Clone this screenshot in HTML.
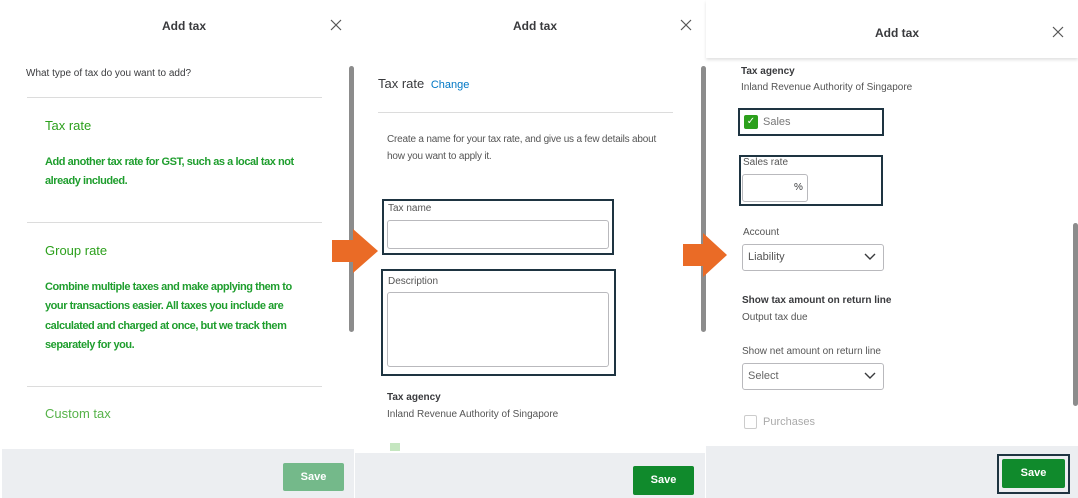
<!DOCTYPE html>
<html><head><style>
*{margin:0;padding:0;box-sizing:border-box}
body{width:1078px;height:498px;position:relative;overflow:hidden;background:#fff;font-family:"Liberation Sans",sans-serif;color:#393a3d}
.a{position:absolute}
.t{font-size:12px;font-weight:bold;color:#393a3d}
.g{color:#2ca01c}
.gb{color:#1f9e2e;font-weight:bold;font-size:11px;line-height:19.3px;letter-spacing:-0.45px}
.hl{position:absolute;height:1px;background:#dcdcdc}
.box{position:absolute;border:2px solid #1e3441}
.inp{position:absolute;border:1px solid #b9b9bd;border-radius:3px;background:#fff}
.lab{font-size:10px;color:#555}
.foot{position:absolute;background:#eceef1}
.save{position:absolute;background:#108a2c;color:#fff;font-weight:bold;font-size:11px;text-align:center;border-radius:2px}
.sb{position:absolute;width:5px;background:#8c8c8c;border-radius:3px}
</style></head><body>
<!-- panel 1 -->
<div class="a t" style="left:162px;top:19px">Add tax</div>
<svg class="a" style="left:330px;top:19px" width="12" height="12"><path d="M1 1L11 11M11 1L1 11" stroke="#555" stroke-width="1.2"/></svg>
<div class="a" style="left:26px;top:68px;font-size:10px;color:#393a3d">What type of tax do you want to add?</div>
<div class="hl" style="left:27px;top:97px;width:295px"></div>
<div class="a g" style="left:45px;top:118px;font-size:13px">Tax rate</div>
<div class="a gb" style="left:45px;top:153px;width:260px">Add another tax rate for GST, such as a local tax not already included.</div>
<div class="hl" style="left:27px;top:222px;width:295px"></div>
<div class="a g" style="left:45px;top:243px;font-size:13px">Group rate</div>
<div class="a gb" style="left:45px;top:278px;width:260px">Combine multiple taxes and make applying them to your transactions easier. All taxes you include are calculated and charged at once, but we track them separately for you.</div>
<div class="hl" style="left:27px;top:386px;width:295px"></div>
<div class="a g" style="left:45px;top:406px;font-size:13px;opacity:.8">Custom tax</div>
<div class="sb" style="left:349px;top:66px;height:266px"></div>
<div class="foot" style="left:2px;top:449px;width:352px;height:49px"></div>
<div class="save" style="left:283px;top:463px;width:61px;height:28px;line-height:28px;background:#74b98a">Save</div>

<!-- panel 2 -->
<div class="a t" style="left:513px;top:19px">Add tax</div>
<svg class="a" style="left:680px;top:19px" width="12" height="12"><path d="M1 1L11 11M11 1L1 11" stroke="#555" stroke-width="1.2"/></svg>
<div class="a" style="left:378px;top:76px;font-size:13px">Tax rate <span style="color:#0077c5;font-size:11px;margin-left:3px">Change</span></div>
<div class="hl" style="left:378px;top:112px;width:295px"></div>
<div class="a" style="left:387px;top:131px;font-size:10px;line-height:17px;width:285px;color:#555;letter-spacing:-0.2px">Create a name for your tax rate, and give us a few details about how you want to apply it.</div>
<div class="box" style="left:382px;top:199px;width:232px;height:56px"></div>
<div class="a lab" style="left:388px;top:203px">Tax name</div>
<div class="inp" style="left:387px;top:220px;width:222px;height:29px"></div>
<div class="box" style="left:381px;top:269px;width:235px;height:107px"></div>
<div class="a lab" style="left:388px;top:276px">Description</div>
<div class="inp" style="left:387px;top:292px;width:222px;height:75px"></div>
<div class="a" style="left:387px;top:392px;font-size:10px;font-weight:bold">Tax agency</div>
<div class="a lab" style="left:387px;top:409px">Inland Revenue Authority of Singapore</div>
<div class="a" style="left:390px;top:443px;width:10px;height:8px;background:#c5e6c0"></div>
<div class="sb" style="left:701px;top:66px;height:266px"></div>
<div class="foot" style="left:355px;top:453px;width:350px;height:45px"></div>
<div class="save" style="left:633px;top:466px;width:61px;height:29px;line-height:29px">Save</div>

<!-- panel 3 -->
<div class="a" style="left:706px;top:0;width:372px;height:58px;box-shadow:0 2px 3px rgba(0,0,0,.12);background:#fff"></div>
<div class="a t" style="left:875px;top:26px">Add tax</div>
<svg class="a" style="left:1052px;top:26px" width="12" height="12"><path d="M1 1L11 11M11 1L1 11" stroke="#555" stroke-width="1.2"/></svg>
<div class="a" style="left:741px;top:66px;font-size:10px;font-weight:bold">Tax agency</div>
<div class="a lab" style="left:741px;top:82px">Inland Revenue Authority of Singapore</div>
<div class="box" style="left:738px;top:108px;width:146px;height:28px"></div>
<div class="a" style="left:744px;top:115px;width:14px;height:14px;background:#2ca01c;border-radius:2px;color:#fff;font-size:10px;line-height:14px;text-align:center">✓</div>
<div class="a" style="left:763px;top:116px;font-size:11px;color:#777">Sales</div>
<div class="box" style="left:739px;top:155px;width:144px;height:51px"></div>
<div class="a lab" style="left:743px;top:157px">Sales rate</div>
<div class="inp" style="left:742px;top:174px;width:66px;height:28px"></div>
<div class="a" style="left:794px;top:182px;font-size:10px">%</div>
<div class="a lab" style="left:743px;top:227px">Account</div>
<div class="inp" style="left:742px;top:244px;width:142px;height:27px"></div>
<div class="a" style="left:748px;top:251px;font-size:11px;color:#555">Liability</div>
<svg class="a" style="left:864px;top:252px" width="12" height="10"><path d="M1 2 L6 7 L11 2" stroke="#393a3d" stroke-width="1.4" fill="none"/></svg>
<div class="a" style="left:742px;top:295px;font-size:10px;font-weight:bold">Show tax amount on return line</div>
<div class="a lab" style="left:742px;top:312px">Output tax due</div>
<div class="a lab" style="left:742px;top:346px">Show net amount on return line</div>
<div class="inp" style="left:742px;top:363px;width:142px;height:27px"></div>
<div class="a" style="left:748px;top:370px;font-size:11px;color:#666">Select</div>
<svg class="a" style="left:864px;top:371px" width="12" height="10"><path d="M1 2 L6 7 L11 2" stroke="#393a3d" stroke-width="1.4" fill="none"/></svg>
<div class="a" style="left:744px;top:415px;width:13px;height:14px;border:1px solid #ccc;border-radius:2px"></div>
<div class="a" style="left:763px;top:416px;font-size:11px;color:#aaa">Purchases</div>
<div class="sb" style="left:1073px;top:223px;height:183px"></div>
<div class="foot" style="left:706px;top:446px;width:372px;height:52px"></div>
<div class="a" style="left:997px;top:454px;width:73px;height:40px;border:2px solid #1e3441"></div>
<div class="save" style="left:1002px;top:459px;width:63px;height:29px;line-height:29px">Save</div>

<!-- arrows -->
<svg class="a" style="left:332px;top:229px" width="46" height="44"><path d="M0 11 H21 V0 L46 22 L21 44 V33 H0 Z" fill="#ea6b26"/></svg>
<svg class="a" style="left:683px;top:233px" width="44" height="44"><path d="M0 11 H20 V0 L44 22 L20 44 V33 H0 Z" fill="#ea6b26"/></svg>
</body></html>
